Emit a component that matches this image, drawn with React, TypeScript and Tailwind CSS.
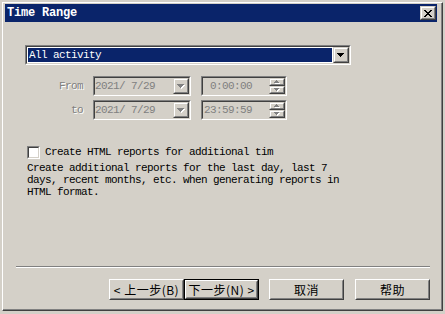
import React from "react";

function Sunken({ className = "", innerClass = "", children }: { className?: string; innerClass?: string; children?: React.ReactNode }) {
  return (
    <div className={`border border-t-[#808080] border-l-[#808080] border-r-white border-b-white ${className}`}>
      <div className={`h-full border border-t-[#404040] border-l-[#404040] border-r-[#d4d0c8] border-b-[#d4d0c8] ${innerClass}`}>{children}</div>
    </div>
  );
}

function SmallBtn({ className = "", children }: { className?: string; children?: React.ReactNode }) {
  return (
    <div className={`border border-t-[#d4d0c8] border-l-[#d4d0c8] border-r-[#404040] border-b-[#404040] bg-[#d4d0c8] ${className}`}>
      <div className="h-full border border-t-white border-l-white border-r-[#808080] border-b-[#808080] flex items-center justify-center">
        {children}
      </div>
    </div>
  );
}

function DownArrow({ color = "#000", shadow = false }: { color?: string; shadow?: boolean }) {
  const rows = [
    [0, 0, 7],
    [1, 1, 5],
    [2, 2, 3],
    [3, 3, 1],
  ];
  return (
    <svg width="8" height="5" viewBox="0 0 8 5" shapeRendering="crispEdges">
      {shadow && rows.map(([y, x, w]) => <rect key={"s" + y} x={x + 1} y={y + 1} width={w} height={1} fill="#fff" />)}
      {rows.map(([y, x, w]) => <rect key={y} x={x} y={y} width={w} height={1} fill={color} />)}
    </svg>
  );
}

function TinyArrow({ up }: { up: boolean }) {
  const rows = up
    ? [
        [0, 2, 1],
        [1, 1, 3],
        [2, 0, 5],
      ]
    : [
        [0, 0, 5],
        [1, 1, 3],
        [2, 2, 1],
      ];
  return (
    <svg width="6" height="4" viewBox="0 0 6 4" shapeRendering="crispEdges">
      {rows.map(([y, x, w]) => <rect key={"s" + y} x={x + 1} y={y + 1} width={w} height={1} fill="#fff" />)}
      {rows.map(([y, x, w]) => <rect key={y} x={x} y={y} width={w} height={1} fill="#808080" />)}
    </svg>
  );
}

function PushBtn({ children, isDefault = false, className = "" }: { children?: React.ReactNode; isDefault?: boolean; className?: string }) {
  const inner = (
    <div className="h-full border border-t-white border-l-white border-r-[#404040] border-b-[#404040]">
      <div className="h-full border border-t-[#d4d0c8] border-l-[#d4d0c8] border-r-[#808080] border-b-[#808080] flex items-center justify-center font-['Noto_Sans_CJK_SC',sans-serif] text-[12px] leading-none text-black whitespace-pre tracking-[0.5px]">
        {children}
      </div>
    </div>
  );
  if (isDefault) {
    return <div className={`w-[75px] h-[21px] border border-black ${className}`}>{inner}</div>;
  }
  return <div className={`w-[75px] h-[21px] ${className}`}>{inner}</div>;
}

const mono = "font-['Liberation_Mono','Noto_Sans_CJK_SC',monospace] text-[11px] tracking-[-0.6px]";

export default function App() {
  return (
    <div className="w-[445px] h-[314px] bg-[#d4d0c8] pl-[2px] pt-[2px] overflow-hidden">
      <div className="w-[441px] h-[309px] border border-t-white border-l-white border-r-[#404040] border-b-[#404040]">
        <div className="h-full border-r border-b border-r-[#808080] border-b-[#808080] pt-[1px] pl-[2px] pr-[4px] flex flex-col">
          {/* Title bar */}
          <div className="h-[18px] bg-[#0a246a] flex items-center pl-[2px] pr-[1px]">
            <span className="font-['Liberation_Mono',monospace] font-bold text-[12px] tracking-[-0.2px] text-white leading-none">Time Range</span>
            <div className="flex-1" />
            <SmallBtn className="w-[16px] h-[14px]">
              <svg width="8" height="7" viewBox="0 0 8 7" shapeRendering="crispEdges">
                <path d="M0 0h2v1h-2z M6 0h2v1h-2z M1 1h2v1h-2z M5 1h2v1h-2z M2 2h4v1h-4z M3 3h2v1h-2z M2 4h4v1h-4z M1 5h2v1h-2z M5 5h2v1h-2z M0 6h2v1h-2z M6 6h2v1h-2z" fill="#000" />
              </svg>
            </SmallBtn>
          </div>

          {/* Activity combo */}
          <Sunken className="mt-[23px] ml-[20px] w-[326px] h-[20px]" innerClass="bg-white flex">
            <div className="flex-1 p-[1px] flex">
              <div className={`flex-1 bg-[#0a246a] text-white ${mono} leading-none flex items-center pl-[1px]`}>All activity</div>
            </div>
            <SmallBtn className="w-[16px] h-[16px]">
              <DownArrow />
            </SmallBtn>
          </Sunken>

          {/* From row */}
          <div className="mt-[11px] ml-[20px] flex items-center h-[20px]">
            <div className={`w-[58px] text-right ${mono} text-[#808080] [text-shadow:1px_1px_0_#fff] leading-none`}>From</div>
            <Sunken className="ml-[10px] w-[98px] h-[20px]" innerClass="bg-[#d4d0c8] flex items-center">
              <div className={`flex-1 ${mono} text-[#808080] leading-none whitespace-pre`}>2021/ 7/29</div>
              <SmallBtn className="w-[16px] h-[16px]">
                <DownArrow color="#808080" shadow />
              </SmallBtn>
            </Sunken>
            <Sunken className="ml-[10px] w-[86px] h-[20px]" innerClass="bg-[#d4d0c8] flex items-center">
              <div className={`flex-1 ${mono} text-[#808080] leading-none whitespace-pre pl-[1px]`}> 0:00:00</div>
              <div className="w-[16px] h-[16px] flex flex-col">
                <SmallBtn className="w-[16px] h-[8px]">
                  <TinyArrow up />
                </SmallBtn>
                <SmallBtn className="w-[16px] h-[8px]">
                  <TinyArrow up={false} />
                </SmallBtn>
              </div>
            </Sunken>
          </div>

          {/* To row */}
          <div className="mt-[4px] ml-[20px] flex items-center h-[20px]">
            <div className={`w-[58px] text-right ${mono} text-[#808080] [text-shadow:1px_1px_0_#fff] leading-none`}>to</div>
            <Sunken className="ml-[10px] w-[98px] h-[20px]" innerClass="bg-[#d4d0c8] flex items-center">
              <div className={`flex-1 ${mono} text-[#808080] leading-none whitespace-pre`}>2021/ 7/29</div>
              <SmallBtn className="w-[16px] h-[16px]">
                <DownArrow color="#808080" shadow />
              </SmallBtn>
            </Sunken>
            <Sunken className="ml-[10px] w-[86px] h-[20px]" innerClass="bg-[#d4d0c8] flex items-center">
              <div className={`flex-1 ${mono} text-[#808080] leading-none whitespace-pre pl-[1px]`}>23:59:59</div>
              <div className="w-[16px] h-[16px] flex flex-col">
                <SmallBtn className="w-[16px] h-[8px]">
                  <TinyArrow up />
                </SmallBtn>
                <SmallBtn className="w-[16px] h-[8px]">
                  <TinyArrow up={false} />
                </SmallBtn>
              </div>
            </Sunken>
          </div>

          {/* Checkbox */}
          <div className="mt-[26px] ml-[22px] flex items-center h-[13px]">
            <Sunken className="w-[13px] h-[13px]" innerClass="bg-white" />
            <span className={`ml-[5px] ${mono} text-black leading-none whitespace-pre`}>Create HTML reports for additional tim</span>
          </div>

          <div className={`mt-[3px] ml-[22px] ${mono} text-black leading-[12px] whitespace-pre`}>
            Create additional reports for the last day, last 7
            <br />
            days, recent months, etc. when generating reports in
            <br />
            HTML format.
          </div>

          <div className="flex-1" />

          {/* Separator */}
          <div className="ml-[11px] w-[414px] h-[2px] border-t border-b border-t-[#808080] border-b-white" />

          {/* Buttons */}
          <div className="mt-[11px] mb-[9px] ml-[104px] flex items-start">
            <PushBtn>{"< 上一步(B)"}</PushBtn>
            <PushBtn isDefault>{"下一步(N) >"}</PushBtn>
            <PushBtn className="ml-[10px]">取消</PushBtn>
            <PushBtn className="ml-[11px]">帮助</PushBtn>
          </div>
        </div>
      </div>
    </div>
  );
}
